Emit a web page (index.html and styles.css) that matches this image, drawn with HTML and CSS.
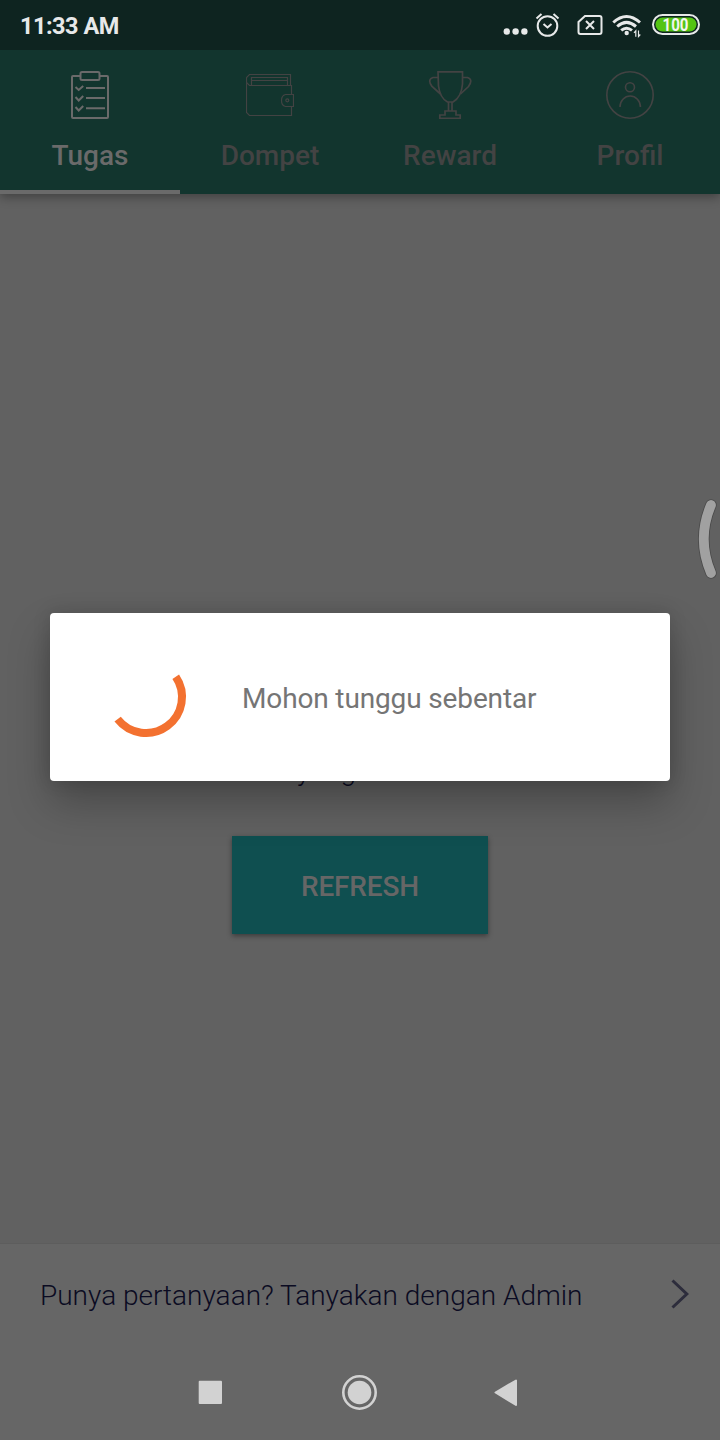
FILE: index.html
```html
<!DOCTYPE html>
<html lang="id">
<head>
<meta charset="utf-8">
<title>Tugas</title>
<link rel="stylesheet" href="styles.css">
</head>
<body>
<div class="screen">
  <header class="header">
    <div class="status">
      <span class="clock">11:33 AM</span>
      <svg class="status-icons" width="200" height="50" viewBox="500 0 200 50" fill="none" stroke="#e7e9e9" stroke-width="2">
        <g fill="#e7e9e9" stroke="none"><circle cx="506.8" cy="31.5" r="3.2"/><circle cx="515.6" cy="31.5" r="3.2"/><circle cx="524.4" cy="31.5" r="3.2"/></g>
        <circle cx="547.5" cy="26" r="9.8"/>
        <path d="M536.500 18.500l5-4.500M558.500 18.500l-5-4.500M543.500 24l4 3.500 4-3.500"/>
        <path d="M585 16h14.500q2 0 2 2v14q0 2-2 2h-19q-2 0-2-2V22z"/>
        <path d="M586 21l8 8m0-8l-8 8"/>
        <path stroke-width="3" d="M613.300 22.500Q626.500 10.500 640 22.500M617.200 26.500Q626.500 18.200 636 26.500M621.200 30.400Q626.500 26 632 30.400"/>
        <circle cx="626.700" cy="33" r="2.200" fill="#e7e9e9" stroke="none"/>
        <path stroke-width="1.200" d="M635.800 36.800v-6l-1.800 2M638.500 30.500v6l1.800-2"/>
        <rect x="653" y="15" width="46" height="19" rx="9.500"/>
        <rect x="655.500" y="17.500" width="41" height="14" rx="7" fill="#54c413" stroke="none"/>
        <text class="battery" x="675.500" y="31" textLength="26" lengthAdjust="spacingAndGlyphs">100</text>
      </svg>
    </div>
    <nav class="tabs">
      <a class="tab active">
        <svg class="icon" viewBox="0 0 48 48" stroke-width="2">
          <path d="M14 5H7Q6 5 6 6v40q0 1 1 1h34q1 0 1-1V6q0-1-1-1h-7"/><rect x="14.500" y="1" width="19" height="8" rx="1.500"/>
          <path d="M20 17h19M20 27h19M20 37.300h19"/>
          <path d="M9.500 16l3.200 3 4.500-4M9.500 26l3.200 3.500 4.500-4.500M9.500 36l3.200 3.500 4.500-4.500"/>
        </svg>
        <span>Tugas</span>
      </a>
      <a class="tab">
        <svg class="icon" viewBox="0 0 48 48" stroke-width="1.200">
          <path d="M45.500 20.500v-6h-1v-11h-41l-3 3v35l3 3h42v-9"/>
          <path d="M.5 11.500l3 3h41M5.500 14.500v-8h36v8M5.500 9.500h36"/>
          <path d="M47.500 20.500h-8q-4 1-4 6t4 6h8z" transform="translate(0 3)"/><path d="M45.500 20v3.500"/><circle cx="41.300" cy="29.300" r="1.500"/>
        </svg>
        <span>Dompet</span>
      </a>
      <a class="tab">
        <svg class="icon" viewBox="0 0 48 48" stroke-width="1.700">
          <path d="M12 .8h24.500V13Q35.500 26 27 31h-5.500Q14 27 12.500 15z"/>
          <path d="M12 6.500H7Q1 8.500 6 15.500L14.500 23M36.500 6.500h5q6 2 1 9L34.500 23M22.500 31v9M26 31v9M19 44v-4h11v4h4.200v3.300H13.800V44z"/>
        </svg>
        <span>Reward</span>
      </a>
      <a class="tab">
        <svg class="icon" viewBox="0 0 48 48" stroke-width="1.600">
          <circle cx="24" cy="24" r="23.200"/><circle cx="24" cy="16.200" r="4.500"/>
          <path d="M14 36a10.200 11 0 0 1 20.400 0"/>
        </svg>
        <span>Profil</span>
      </a>
    </nav>
  </header>

  <main class="content">
    <p class="message">yang</p>
    <button class="refresh">REFRESH</button>
  </main>

  <a class="help">
    <span>Punya pertanyaan? Tanyakan dengan Admin</span>
    <svg width="19" height="30" viewBox="0 0 19 30" fill="none" stroke="#2d2d3c" stroke-width="3"><path d="M1.500 1.500L15.800 15 1.500 28.500"/></svg>
  </a>

  <footer class="navbar">
    <svg width="320" height="40" viewBox="198 1372 320 40" fill="#d2d2d2">
      <rect x="198.700" y="1380.700" width="23.300" height="23.300" rx="1"/>
      <circle cx="359.500" cy="1392.500" r="11.800"/>
      <circle cx="359.500" cy="1392.500" r="16.200" fill="none" stroke="#d2d2d2" stroke-width="2.600"/>
      <path d="M495.500 1392.500L516 1380.500V1405z" stroke="#d2d2d2" stroke-width="2" stroke-linejoin="round"/>
    </svg>
  </footer>

  <svg class="handle" width="24" height="84" viewBox="696 497 24 84" fill="none" stroke-linecap="round">
    <path d="M711 505Q696.500 539 711 573" stroke="#4b4b4b" stroke-width="11.500"/>
    <path d="M711 505Q696.500 539 711 573" stroke="#a1a1a1" stroke-width="9.800"/>
  </svg>

  <div class="dialog" role="dialog">
    <svg class="spinner" width="96" height="96" viewBox="98 649 96 96" fill="none"><path d="M175.740 676.710A36 36 0 0 1 117.630 719.160" stroke="#f37130" stroke-width="8"/></svg>
    <span>Mohon tunggu sebentar</span>
  </div>
</div>
</body>
</html>
```
FILE: styles.css
```css
* { box-sizing: border-box; }
body { margin: 0; font-family: Roboto, sans-serif; }
.screen {
  position: relative;
  display: flex;
  flex-direction: column;
  width: 720px;
  height: 1440px;
  overflow: hidden;
  background: #616161;
}
.header { background: #12352e; box-shadow: 0 3px 10px rgba(0, 0, 0, .35); }
.status {
  display: flex;
  align-items: center;
  justify-content: space-between;
  height: 50px;
  padding: 0 20px;
  background: #0e2420;
}
.clock { padding-top: 2px; color: #e7e9e9; font-size: 23.5px; font-weight: 700; letter-spacing: -.5px; line-height: 28px; }
.battery { fill: #f2f5ef; stroke: none; font-size: 18px; font-weight: 700; text-anchor: middle; }
.tabs { display: flex; height: 144px; }
.tab {
  display: flex;
  flex: 1;
  flex-direction: column;
  align-items: center;
  padding-top: 21px;
  color: #434343;
  font-size: 28px;
  font-weight: 500;
  line-height: 34px;
}
.tab.active { color: #6a6a6a; border-bottom: 4px solid #6a6a6a; }
.tab span { margin-top: 20px; }
.icon { width: 48px; height: 48px; fill: none; stroke: currentColor; }
.content { display: flex; flex-direction: column; align-items: center; height: 1049px; padding-top: 559px; }
.message { width: 126px; margin: 0; color: #0b0b22; font-size: 28px; font-weight: 300; line-height: 36px; }
.refresh {
  width: 256px;
  height: 98px;
  margin-top: 47px;
  padding: 3px 0 0;
  border: 0;
  background: #0f4f50;
  box-shadow: 0 2px 5px rgba(0, 0, 0, .4);
  color: #666;
  font-family: inherit;
  font-size: 28px;
  font-weight: 500;
  letter-spacing: -.15px;
}
.help {
  display: flex;
  align-items: center;
  justify-content: space-between;
  height: 102px;
  padding: 0 30px 0 40px;
  border-top: 1px solid #5d5d5d;
  background: #666;
  color: #0b0b22;
  font-size: 28px;
  font-weight: 300;
}
.help span { padding-top: 2px; }
.help svg { margin-bottom: 2px; }
.navbar { display: flex; justify-content: center; height: 95px; padding: 27px 4px 0 0; background: #666; }
.handle { position: absolute; top: 497px; right: 0; }
.dialog {
  position: absolute;
  top: 613px;
  left: 50px;
  display: flex;
  align-items: center;
  gap: 48px;
  width: 620px;
  height: 168px;
  padding: 0 48px;
  border-radius: 4px;
  background: #fff;
  box-shadow: 0 22px 42px rgba(0, 0, 0, .26), 0 0 18px rgba(0, 0, 0, .14);
  color: #757575;
  font-size: 28px;
  letter-spacing: -.14px;
}
.dialog span { padding-top: 3px; }
```
